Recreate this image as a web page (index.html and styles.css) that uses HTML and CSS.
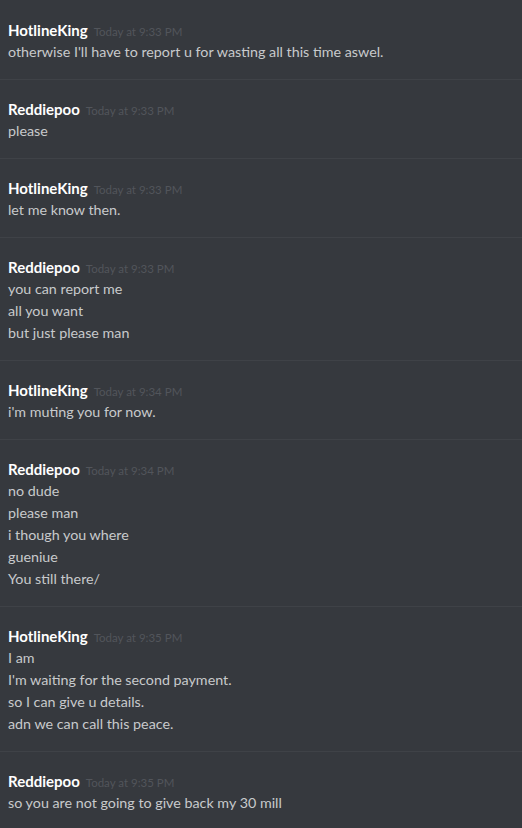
FILE: index.html
```html
<!DOCTYPE html>
<html lang="en">
<head>
    <meta charset="UTF-8">
    <meta name="viewport" content="width=device-width, initial-scale=1.0">
    <title>Chat</title>
    <link rel="stylesheet" href="styles.css">
</head>
<body>
    <div class="chat">
        <div class="group first">
            <div class="header"><span class="name">HotlineKing</span><span class="time">Today at 9:33 PM</span></div>
            <div class="line">otherwise I'll have to report u for wasting all this time aswel.</div>
        </div>
        <div class="group">
            <div class="header"><span class="name">Reddiepoo</span><span class="time">Today at 9:33 PM</span></div>
            <div class="line">please</div>
        </div>
        <div class="group">
            <div class="header"><span class="name">HotlineKing</span><span class="time">Today at 9:33 PM</span></div>
            <div class="line">let me know then.</div>
        </div>
        <div class="group">
            <div class="header"><span class="name">Reddiepoo</span><span class="time">Today at 9:33 PM</span></div>
            <div class="line">you can report me</div>
            <div class="line">all you want</div>
            <div class="line">but just please man</div>
        </div>
        <div class="group">
            <div class="header"><span class="name">HotlineKing</span><span class="time">Today at 9:34 PM</span></div>
            <div class="line">i'm muting you for now.</div>
        </div>
        <div class="group">
            <div class="header"><span class="name">Reddiepoo</span><span class="time">Today at 9:34 PM</span></div>
            <div class="line">no dude</div>
            <div class="line">please man</div>
            <div class="line">i though you where</div>
            <div class="line">gueniue</div>
            <div class="line">You still there/</div>
        </div>
        <div class="group">
            <div class="header"><span class="name">HotlineKing</span><span class="time">Today at 9:35 PM</span></div>
            <div class="line">I am</div>
            <div class="line">I'm waiting for the second payment.</div>
            <div class="line">so I can give u details.</div>
            <div class="line">adn we can call this peace.</div>
        </div>
        <div class="group">
            <div class="header"><span class="name">Reddiepoo</span><span class="time">Today at 9:35 PM</span></div>
            <div class="line">so you are not going to give back my 30 mill</div>
        </div>
    </div>
</body>
</html>
```

FILE: styles.css
```css
body{
    margin: 0;
    padding: 0;
    background-color: #36393e;
    font-family: Lato, "Open Sans", sans-serif;
    height: 100vh;
    overflow: hidden;
}
.chat{
    display: flex;
    flex-direction: column;
}
.group{
    padding: 18px 8px 16px 8px;
    border-top: 1px solid #3f4247;
}
.group.first{
    padding-top: 19px;
    border-top: none;
}
.header{
    display: flex;
    align-items: baseline;
    gap: 6px;
    height: 22px;
    line-height: 22px;
}
.name{
    color: #ffffff;
    font-weight: 700;
    font-size: 15px;
}
.time{
    color: #52555b;
    font-size: 11.5px;
}
.line{
    color: #c8cacc;
    font-size: 14.3px;
    height: 22px;
    line-height: 22px;
}
```
